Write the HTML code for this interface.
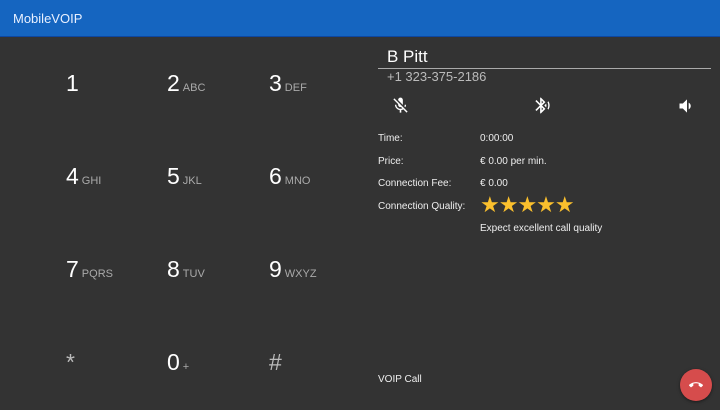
<!DOCTYPE html>
<html><head><style>
body{margin:0;width:720px;height:410px;background:#333;font-family:"Liberation Sans",sans-serif;position:relative;overflow:hidden;color:#fff}
.hdr{position:absolute;left:0;top:0;width:720px;height:36px;background:#1565c0;border-bottom:1px solid #0d47a1}
.hdr span{position:absolute;left:13px;top:11px;font-size:13px;color:#e8f0ff}
.k{position:absolute;font-size:23px;color:#fff;white-space:nowrap}
.k small{font-size:11px;color:#aaa;margin-left:3px}
.t{position:absolute;font-size:10px;color:#eee}
</style></head><body>
<div class="hdr"><span>MobileVOIP</span></div>
<div class="k" style="left:66px;top:70px">1</div>
<div class="k" style="left:167px;top:70px">2<small>ABC</small></div>
<div class="k" style="left:269px;top:70px">3<small>DEF</small></div>
<div class="k" style="left:66px;top:163px">4<small>GHI</small></div>
<div class="k" style="left:167px;top:163px">5<small>JKL</small></div>
<div class="k" style="left:269px;top:163px">6<small>MNO</small></div>
<div class="k" style="left:66px;top:256px">7<small>PQRS</small></div>
<div class="k" style="left:167px;top:256px">8<small>TUV</small></div>
<div class="k" style="left:269px;top:256px">9<small>WXYZ</small></div>
<div class="k" style="left:66px;top:349px;color:#bbb">*</div>
<div class="k" style="left:167px;top:349px">0<small>+</small></div>
<div class="k" style="left:269px;top:349px;color:#bbb">#</div>

<div style="position:absolute;left:387px;top:47px;font-size:17px">B Pitt</div>
<div style="position:absolute;left:378px;top:68px;width:333px;height:1px;background:#aaa"></div>
<div style="position:absolute;left:387px;top:69px;font-size:13px;color:#bbb">+1 323-375-2186</div>

<svg style="position:absolute;left:391px;top:96px" width="19" height="19" viewBox="0 0 24 24" fill="#fff"><path d="M19 11h-1.7c0 .74-.16 1.43-.43 2.05l1.23 1.23c.56-.98.9-2.09.9-3.28zm-4.02.17V5c0-1.660-1.34-3-3-3S9 3.34 9 5v.18l5.98 5.990zM4.27 3L3 4.27l6.01 6.01V11c0 1.66 1.33 3 2.99 3 .22 0 .44-.03.65-.08l1.66 1.66c-.71.33-1.5.52-2.31.52-2.76 0-5.3-2.1-5.3-5.1H5c0 3.41 2.72 6.23 6 6.72V21h2v-3.28c.91-.13 1.770-.45 2.54-.9L19.73 21 21 19.73 4.27 3z"/></svg>
<svg style="position:absolute;left:533px;top:96px" width="19" height="19" viewBox="0 0 24 24" fill="#fff"><path d="M14.24 12.01l2.32 2.32c.28-.72.44-1.51.44-2.33 0-.82-.16-1.59-.43-2.31l-2.33 2.32zm5.29-5.3l-1.26 1.26c.63 1.21.98 2.57.98 4.02s-.36 2.82-.98 4.02l1.2 1.2c.97-1.54 1.54-3.36 1.54-5.31-.01-1.89-.55-3.67-1.48-5.190zm-3.82 1L10 2H9v7.59L4.41 5 3 6.41 8.59 12 3 17.59 4.41 19 9 14.41V22h1l5.71-5.71-4.3-4.29 4.3-4.290zM11 5.83l1.88 1.88L11 9.59V5.83zm1.88 10.46L11 18.17v-3.76l1.88 1.88z"/></svg>
<svg style="position:absolute;left:677px;top:96px" width="20" height="20" viewBox="0 0 24 24" fill="#fff"><path d="M3 9v6h4l5 5V4L7 9H3zm13.5 3c0-1.77-1.02-3.29-2.5-4.03v8.05c1.48-.73 2.5-2.25 2.5-4.02z"/></svg>

<div class="t" style="left:378px;top:133px">Time:</div>
<div class="t" style="left:480px;top:133px">0:00:00</div>
<div class="t" style="left:378px;top:156px">Price:</div>
<div class="t" style="left:480px;top:156px">€ 0.00 per min.</div>
<div class="t" style="left:378px;top:178px">Connection Fee:</div>
<div class="t" style="left:480px;top:178px">€ 0.00</div>
<div class="t" style="left:378px;top:201px">Connection Quality:</div>
<div style="position:absolute;left:480px;top:193px;font-size:22px;color:#fbc02d;letter-spacing:-1px;font-family:'DejaVu Sans',sans-serif">★★★★★</div>
<div class="t" style="left:480px;top:223px">Expect excellent call quality</div>
<div class="t" style="left:378px;top:374px">VOIP Call</div>

<div style="position:absolute;left:680px;top:369px;width:32px;height:32px;border-radius:50%;background:#d64c4c;box-shadow:0 1px 3px rgba(0,0,0,.5)">
<svg style="position:absolute;left:9px;top:9px" width="14" height="14" viewBox="0 0 24 24" fill="#fff"><path d="M12 9c-1.6 0-3.15.25-4.6.72v3.1c0 .39-.23.74-.56.9-.98.49-1.87 1.12-2.66 1.85-.18.18-.43.28-.7.28-.28 0-.53-.11-.71-.29L.29 13.08c-.18-.17-.29-.42-.29-.7 0-.28.11-.53.29-.71C3.34 8.78 7.46 7 12 7s8.66 1.78 11.71 4.67c.18.18.29.43.29.71 0 .28-.11.53-.29.71l-2.48 2.48c-.18.18-.43.29-.71.29-.27 0-.52-.11-.7-.28-.79-.74-1.690-1.36-2.67-1.85-.33-.16-.56-.5-.56-.9v-3.1C15.15 9.25 13.6 9 12 9z"/></svg>
</div>
</body></html>
